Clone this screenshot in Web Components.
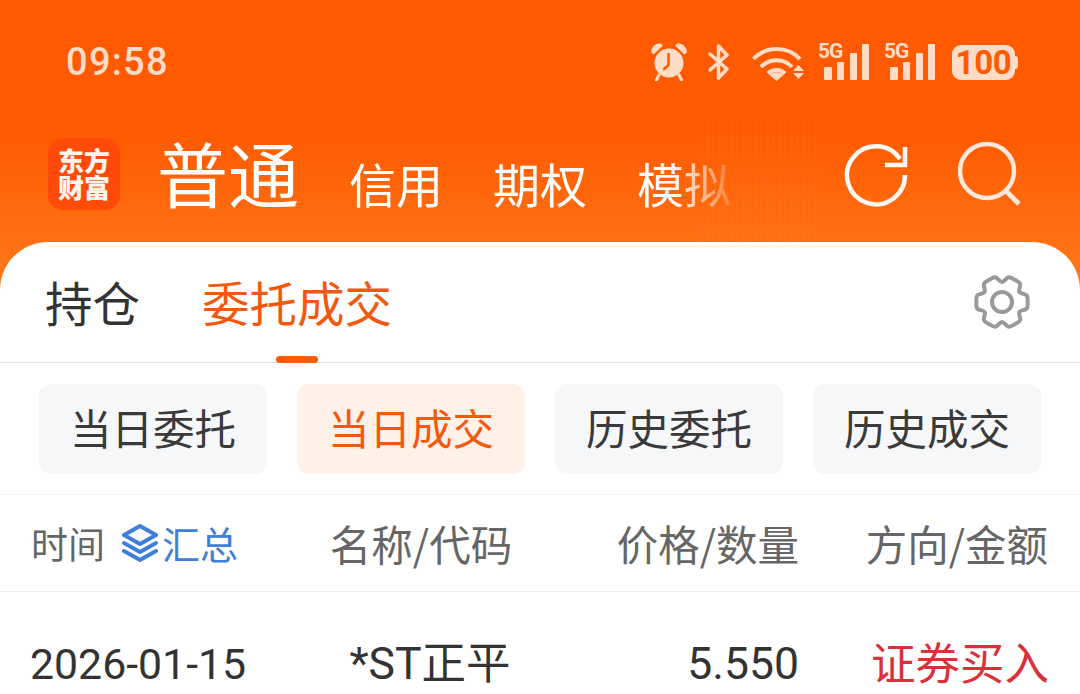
<!DOCTYPE html>
<html lang="zh"><head><meta charset="utf-8"><title>委托成交</title>
<style>
html,body{margin:0;padding:0;height:694px;overflow:hidden;background:#fff;font-family:Roboto,"Noto Sans CJK SC",sans-serif}
</style></head><body>
<trade-app></trade-app>
<template id="t-app">
<style>
:host{display:flex;flex-direction:column;width:1080px;height:694px;overflow:hidden;background:linear-gradient(180deg,#ff5a00 0,#ff5a00 130px,#ff7a1c 290px)}
main{flex:1;display:flex;flex-direction:column;background:#fff;border-radius:48px 48px 0 0;overflow:hidden}
</style>
<status-bar></status-bar>
<nav-bar></nav-bar>
<main>
<main-tabs></main-tabs>
<sub-tabs></sub-tabs>
<table-head></table-head>
<trade-row></trade-row>
</main>
</template>
<template id="t-status">
<style>
:host{display:flex;height:120px;box-sizing:border-box;padding:43px 62px 0 66px;justify-content:space-between;align-items:flex-start;color:#ffdcc6}
.time{font:500 38px/38px Roboto,sans-serif;letter-spacing:1.3px}
.icons{display:flex;height:38px;align-items:flex-start}
svg{display:block;flex:none}
.sig{position:relative;width:52px;height:38px;margin-left:14px}
.sig b{position:absolute;left:0;top:-3px;font:700 21px/22px Roboto,sans-serif;letter-spacing:-1px;color:#ffdcc6}
.bat{display:flex;align-items:center;width:66px;height:35px;margin:2px 0 0 16px}
.bat span{width:63px;height:35px;background:#ffdcc6;border-radius:9px;color:#ff5a00;font:700 33px/35px Roboto,sans-serif;text-align:center;letter-spacing:-.3px}
.bat i{width:3px;height:13px;background:#ffdcc6;border-radius:0 3px 3px 0}
</style>
<div class="time">09:58</div>
<div class="icons">
<svg width="36" height="38" viewBox="0 0 36 38"><circle cx="18" cy="20" r="14.500" fill="#ffdcc6"/><path d="M1 9A8 8 0 0 1 9 1L11 2.500 2.500 10.500Z M35 9A8 8 0 0 0 27 1L25 2.500 33.500 10.500Z" fill="#ffdcc6" stroke="#ffdcc6" stroke-width="1.500" stroke-linejoin="round"/><path d="M8 32 5.500 37M28 32l2.500 5" stroke="#ffdcc6" stroke-width="3" stroke-linecap="round"/><path d="M17.500 11V22L13 26" fill="none" stroke="#ff5a00" stroke-width="2.500" stroke-linecap="round" stroke-linejoin="round"/></svg>
<svg style="margin-left:21px;margin-top:1px" width="22" height="36" viewBox="0 0 22 36"><path d="M2 10 19 25 10.500 34V2L19 11 2 26" fill="none" stroke="#ffdcc6" stroke-width="3.500" stroke-linejoin="round" stroke-linecap="round"/></svg>
<svg style="margin-left:22px;margin-top:1px" width="52" height="37" viewBox="0 0 52 37"><g fill="none" stroke="#ffdcc6" stroke-width="4"><path d="M1.500 15A32 32 0 0 1 48 15"/><path d="M9 23A21 21 0 0 1 40 23"/><path d="M16 29.500A12 12 0 0 1 33 29.500"/></g><path d="M17.500 31A10 10 0 0 1 31.500 31L24.500 37Z" fill="#ffdcc6"/><path d="M41 27l5.500-6 5.500 6zM41 29l5.500 6 5.500-6z" fill="#ffdcc6"/></svg>
<div class="sig"><b>5G</b><svg width="52" height="38" viewBox="0 0 52 38"><g fill="#ffdcc6"><rect x="6" y="24" width="8" height="13" rx="1"/><rect x="19" y="19" width="7" height="18" rx="1"/><rect x="32" y="10" width="7" height="27" rx="1"/><rect x="44" y="1" width="7" height="36" rx="1"/></g></svg></div>
<div class="sig"><b>5G</b><svg width="52" height="38" viewBox="0 0 52 38"><g fill="#ffdcc6"><rect x="6" y="24" width="8" height="13" rx="1"/><rect x="19" y="19" width="7" height="18" rx="1"/><rect x="32" y="10" width="7" height="27" rx="1"/><rect x="44" y="1" width="7" height="36" rx="1"/></g></svg></div>
<div class="bat"><span>100</span><i></i></div>
</div>
</template>
<template id="t-nav">
<style>
:host{display:flex;height:122px;box-sizing:border-box;padding:18px 0 0 48px;align-items:flex-start;color:#fff;font-family:"Noto Sans CJK SC",sans-serif;position:relative}
.logo{width:72px;height:72px;box-sizing:border-box;padding-bottom:3px;border-radius:15px;background:#ff4a08;color:#fff6f0;font:900 26px/27px "Noto Sans CJK SC",sans-serif;display:flex;flex-direction:column;align-items:center;justify-content:center;text-align:center;flex:none}
.cur{font-size:71px;line-height:72px;margin:-3px 0 0 37px;flex:none;font-weight:400}
.items{display:flex;gap:50px;font-size:47px;line-height:60px;margin:15px 0 0 50px;width:382px;flex:none;-webkit-mask:linear-gradient(90deg,#000 320px,rgba(0,0,0,.35) 370px,rgba(0,0,0,.15) 382px);mask:linear-gradient(90deg,#000 320px,rgba(0,0,0,.35) 370px,rgba(0,0,0,.15) 382px)}
.items span{flex:none}
svg{display:block;flex:none}
.ghost{position:absolute;left:700px;top:0;width:120px;height:122px;background:repeating-linear-gradient(90deg,rgba(255,255,255,.016) 0 3px,transparent 3px 6px);pointer-events:none}
</style>
<div class="logo"><div>东方</div><div>财富</div></div>
<div class="cur">普通</div>
<div class="items"><span>信用</span><span>期权</span><span>模拟</span></div>
<svg style="margin:3px 0 0 113px" width="66" height="70" viewBox="0 0 66 70" fill="none" stroke="#fff8f2" stroke-width="4.500"><path d="M61 34A29 29 0 1 1 56 18"/><path d="M61 6V24H41"/></svg>
<svg style="margin:0 0 0 48px" width="64" height="74" viewBox="0 0 64 74" fill="none" stroke="#ffe8da" stroke-width="4.500"><circle cx="29" cy="33" r="27"/><path d="M48 53 61 66" stroke-width="5"/></svg>
<div class="ghost"></div>
</template>
<template id="t-tabs">
<style>
:host{display:flex;height:121px;box-sizing:border-box;border-bottom:1px solid #e3e3e3;padding:0 50px 0 45px;font:47.5px/60px "Noto Sans CJK SC",sans-serif;color:#333;position:relative}
.a{margin-left:62px;color:#f2590f}
span{margin-top:30px}
svg{margin:32px 0 0 auto;display:block;flex:none}
.u{position:absolute;left:276px;bottom:-1px;width:42px;height:7px;border-radius:4px;background:#ff5a00}
</style>
<span>持仓</span><span class="a">委托成交</span>
<svg width="56" height="56" viewBox="-28 -28 56 56" fill="none" stroke="#999" stroke-width="4"><path id="p"/><circle r="10"/></svg>
<div class="u"></div>
</template>
<template id="t-sub">
<style>
:host{display:flex;gap:30px;height:132px;box-sizing:border-box;padding:21px 39px 20px;border-bottom:1px solid #f1f1f1}
div{width:228px;height:90px;background:#f6f7f9;border-radius:12px;font:41.5px/87px "Noto Sans CJK SC",sans-serif;color:#3a3a3a;text-align:center}
.a{background:#fff0e8;color:#f2590f}
</style>
<div>当日委托</div><div class="a">当日成交</div><div>历史委托</div><div>历史成交</div>
</template>
<template id="t-head">
<style>
:host{display:flex;height:97px;box-sizing:border-box;padding:0 32px 0 31px;border-bottom:1px solid #eee;align-items:center;font:41.5px/56px "Noto Sans CJK SC",sans-serif;color:#666}
.c1{width:261px;display:flex;align-items:center;font-size:37px}
.c1 svg{margin:0 3px 0 16px;display:block}
.c1 b{font-weight:400;color:#3f80d6;font-size:38px}
.c2{width:258px;text-align:center}
.c3,.c4{width:249px;text-align:right}
</style>
<div class="c1">时间<svg width="38" height="38" viewBox="0 0 38 38" fill="none" stroke="#3f80d6" stroke-width="4" stroke-linejoin="round" stroke-linecap="round"><path d="M19 2 35 11 19 20 3 11Z"/><path d="M3 19 19 28 35 19"/><path d="M3 27 19 36 35 27"/></svg><b>汇总</b></div>
<div class="c2">名称/代码</div><div class="c3">价格/数量</div><div class="c4">方向/金额</div>
</template>
<template id="t-row">
<style>
:host{display:flex;padding:42px 31px 0 30px;align-items:flex-start;height:60px;color:#333;font:44.5px/60px Roboto,"Noto Sans CJK SC",sans-serif}
.c1{width:262px;font-size:42.800px}.c2{width:258px;text-align:center;padding-left:18px;box-sizing:border-box}
.c3{width:249px;text-align:right;margin-right:1px}.c4{width:249px;text-align:right}
.c4{color:#d9303a;font-family:"Noto Sans CJK SC",sans-serif;margin-top:-3px}
</style>
<div class="c1">2026-01-15</div><div class="c2">*ST正平</div><div class="c3">5.550</div><div class="c4">证券买入</div>
</template>
<script>
function def(tag,id,init){customElements.define(tag,class extends HTMLElement{constructor(){super();const r=this.attachShadow({mode:'open'});r.appendChild(document.getElementById(id).content.cloneNode(true));if(init)init(r)}})}
def('status-bar','t-status');def('nav-bar','t-nav');
def('main-tabs','t-tabs',r=>{
 const pts=[];
 for(let i=0;i<6;i++){const t=i*60;[[t-15,25.6],[t,25.6],[t+15,25.6],[t+30,20]].forEach(([d,R])=>{const a=d*Math.PI/180;pts.push([R*Math.cos(a),R*Math.sin(a)])})}
 const n=pts.length,f=v=>v.toFixed(2);
 let d='M'+f(pts[0][0])+' '+f(pts[0][1]);
 for(let i=0;i<n;i++){const p0=pts[(i-1+n)%n],p1=pts[i],p2=pts[(i+1)%n],p3=pts[(i+2)%n];
  d+='C'+f(p1[0]+(p2[0]-p0[0])/6)+' '+f(p1[1]+(p2[1]-p0[1])/6)+' '+f(p2[0]-(p3[0]-p1[0])/6)+' '+f(p2[1]-(p3[1]-p1[1])/6)+' '+f(p2[0])+' '+f(p2[1])}
 r.getElementById('p').setAttribute('d',d+'Z');
});
def('sub-tabs','t-sub');def('table-head','t-head');def('trade-row','t-row');def('trade-app','t-app');
</script>
</body></html>
